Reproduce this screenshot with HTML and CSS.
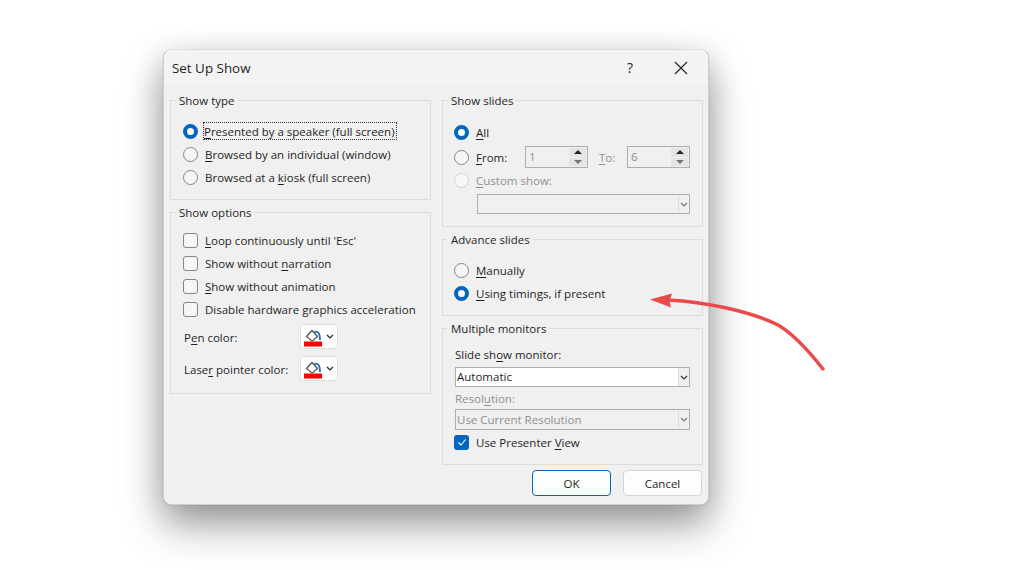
FILE: index.html
```html
<!DOCTYPE html>
<html lang="en">
<head>
<meta charset="utf-8">
<title>Set Up Show</title>
<link rel="stylesheet" href="styles.css">
</head>
<body>
<div class="dialog">
  <header class="titlebar">
    <span class="title">Set Up Show</span>
    <span class="help">?</span>
    <svg class="close" width="14" height="14" viewBox="0 0 14 14"><path d="M1 1L13 13M13 1L1 13" stroke="#222" stroke-width="1.2" fill="none"/></svg>
  </header>
  <div class="content">
    <div class="column">
      <fieldset class="group type">
        <legend>Show type</legend>
        <div class="rows radios">
          <label class="row"><span class="radio on"></span><span class="focus"><u>P</u>resented by a speaker (full screen)</span></label>
          <label class="row"><span class="radio"></span><span class="label"><u>B</u>rowsed by an individual (window)</span></label>
          <label class="row"><span class="radio"></span><span class="label">Browsed at a <u>k</u>iosk (full screen)</span></label>
        </div>
      </fieldset>
      <fieldset class="group options">
        <legend>Show options</legend>
        <div class="rows checks">
          <label class="row"><span class="check"></span><span><u>L</u>oop continuously until 'Esc'</span></label>
          <label class="row"><span class="check"></span><span>Show without <u>n</u>arration</span></label>
          <label class="row"><span class="check"></span><span><u>S</u>how without animation</span></label>
          <label class="row"><span class="check"></span><span>Disable hardware <u>g</u>raphics acceleration</span></label>
        </div>
        <div class="colors">
          <div class="color-row"><span class="color-label">P<u>e</u>n color:</span>
            <span class="color-btn">
              <svg width="20" height="20" viewBox="0 0 20 20"><path d="M2.500 9.500L8 3.500L13.500 9.500L9 13.500H7.500Z" fill="#fff" stroke="#4a4a4a" stroke-width="1.2"/><path d="M10.500 4.800C14 4 16 6 16 13" fill="none" stroke="#1f6fb5" stroke-width="1.800"/><rect y="14.500" width="18" height="5" fill="#f00"/></svg>
              <svg class="chev" width="8" height="5" viewBox="0 0 8 5"><path d="M1 1L4 4L7 1" stroke="#222" stroke-width="1.2" fill="none"/></svg>
            </span></div>
          <div class="color-row"><span class="color-label">Lase<u>r</u> pointer color:</span>
            <span class="color-btn">
              <svg width="20" height="20" viewBox="0 0 20 20"><path d="M2.500 9.500L8 3.500L13.500 9.500L9 13.500H7.500Z" fill="#fff" stroke="#4a4a4a" stroke-width="1.2"/><path d="M10.500 4.800C14 4 16 6 16 13" fill="none" stroke="#1f6fb5" stroke-width="1.800"/><rect y="14.500" width="18" height="5" fill="#f00"/></svg>
              <svg class="chev" width="8" height="5" viewBox="0 0 8 5"><path d="M1 1L4 4L7 1" stroke="#222" stroke-width="1.2" fill="none"/></svg>
            </span></div>
        </div>
      </fieldset>
    </div>
    <div class="column right">
      <fieldset class="group slides">
        <legend>Show slides</legend>
        <label class="row all"><span class="radio on"></span><span><u>A</u>ll</span></label>
        <div class="row from">
          <span class="radio"></span><span class="from-label"><u>F</u>rom:</span>
          <span class="spin"><span class="spin-val">1</span><span class="spin-btns"><span class="up"></span><span class="down"></span></span></span>
          <span class="to-label"><u>T</u>o:</span>
          <span class="spin"><span class="spin-val">6</span><span class="spin-btns"><span class="up"></span><span class="down"></span></span></span>
        </div>
        <label class="row custom disabled"><span class="radio off"></span><span><u>C</u>ustom show:</span></label>
        <div class="combo grey custom-combo"><span class="combo-text"></span><span class="combo-arrow"><svg width="8" height="5" viewBox="0 0 8 5"><path d="M1 1L4 4L7 1" stroke="#777" stroke-width="1.2" fill="none"/></svg></span></div>
      </fieldset>
      <fieldset class="group advance">
        <legend>Advance slides</legend>
        <div class="rows radios">
          <label class="row"><span class="radio"></span><span class="label"><u>M</u>anually</span></label>
          <label class="row"><span class="radio on"></span><span class="label"><u>U</u>sing timings, if present</span></label>
        </div>
      </fieldset>
      <fieldset class="group monitors">
        <legend>Multiple monitors</legend>
        <div class="field-label">Slide sh<u>o</u>w monitor:</div>
        <div class="combo"><span class="combo-text">Automatic</span><span class="combo-arrow"><svg width="8" height="5" viewBox="0 0 8 5"><path d="M1 1L4 4L7 1" stroke="#333" stroke-width="1.2" fill="none"/></svg></span></div>
        <div class="field-label res disabled">Resol<u>u</u>tion:</div>
        <div class="combo grey"><span class="combo-text">Use Current Resolution</span><span class="combo-arrow"><svg width="8" height="5" viewBox="0 0 8 5"><path d="M1 1L4 4L7 1" stroke="#777" stroke-width="1.2" fill="none"/></svg></span></div>
        <label class="row presenter"><span class="check on"><svg width="10" height="10" viewBox="0 0 10 10"><path d="M1.500 5.500L4 8L8.500 2.500" stroke="#fff" stroke-width="1.100" fill="none"/></svg></span><span>Use Presenter <u>V</u>iew</span></label>
      </fieldset>
    </div>
  </div>
  <footer class="actions">
    <button class="btn primary">OK</button>
    <button class="btn">Cancel</button>
  </footer>
</div>
<svg class="arrow" width="1024" height="570" viewBox="0 0 1024 570">
  <path d="M668 300C705 302 750 311 778 325C792 333 808 350 823 369" stroke="#ea4a4a" stroke-width="3.400" stroke-linecap="round" fill="none"/>
  <path d="M650 299.500L672 293.500L669.500 301L671 307.500Z" fill="#ea4a4a"/>
</svg>
</body>
</html>
```
FILE: styles.css
```css
* { box-sizing: border-box; }
html, body { margin: 0; height: 570px; overflow: hidden; background: #fff; }
body {
  padding: 50px 0 0 163px;
  font-family: "Open Sans", "Noto Sans", sans-serif;
  font-size: 11.5px;
  color: #1f1f1f;
}
u { text-underline-offset: 2px; text-decoration-thickness: 1px; }

.dialog {
  width: 546px;
  height: 455px;
  background: #f0f0f0;
  border-radius: 8px;
  border: 1px solid #cfcfcf;
  border-width: 0 1px 1px 1px;
  box-shadow: 0 0 1px rgba(0,0,0,.35), 0 20px 40px rgba(0,0,0,.38), 0 4px 30px rgba(0,0,0,.12);
  display: flex;
  flex-direction: column;
}
.titlebar {
  height: 35px;
  background: #f3f3f3;
  border-radius: 8px 8px 0 0;
  display: flex;
  align-items: center;
  padding: 0 20px 0 8px;
}
.title { font-size: 13.4px; flex: 1; }
.help { font-size: 14px; margin-right: 41px; }

.content {
  flex: 1;
  display: grid;
  grid-template-columns: 261px 261px;
  column-gap: 11px;
  padding: 7px 0 0 6px;
}
.column { display: flex; flex-direction: column; gap: 4px; }

.group {
  margin: 0;
  min-width: 0;
  border: 1px solid #dcdcdc;
  padding: 0 12px;
}
.group legend { padding: 0 3px 0 4px; margin-left: -8px; line-height: 18px; height: 16px; }
.type { height: 108px; }
.options { height: 190px; }
.slides { height: 135px; }
.advance { height: 85px; }
.monitors { height: 145px; }

.rows { display: flex; flex-direction: column; gap: 5px; }
.radios { padding-top: 14px; }
.checks { padding-top: 11px; }
.row { display: flex; align-items: center; height: 18px; white-space: nowrap; }
.label { padding-top: 1px; }

.radio {
  width: 15px;
  height: 15px;
  border-radius: 50%;
  border: 1px solid #858585;
  background: #f6f6f6;
  margin-right: 7px;
  flex: none;
}
.radio.on { border: 4px solid #0067c0; background: #fff; }
.radio.off { border-color: #d2d2d2; background: #f7f7f7; }
.right .radio, .right .check { margin-left: -1px; }

.check {
  width: 15px;
  height: 15px;
  border-radius: 3px;
  border: 1px solid #858585;
  background: #f6f6f6;
  margin-right: 7px;
  flex: none;
  display: flex;
  align-items: center;
  justify-content: center;
}
.check.on { border: 0; background: #0067c0; }

.focus { outline: 1px dotted #333; outline-offset: 0; padding: 1px 1px 0 0; margin-left: -1px; }

.colors { padding-top: 6px; display: flex; flex-direction: column; gap: 7px; }
.color-row { display: flex; align-items: center; height: 25px; padding-left: 1px; }
.color-label { width: 116px; padding-top: 1px; }
.color-btn {
  width: 38px;
  height: 25px;
  background: #fff;
  border: 1px solid #dedede;
  border-radius: 3px;
  display: flex;
  align-items: center;
  padding-left: 3px;
  gap: 2px;
}

.disabled { color: #8f8f8f; }

.all { margin-top: 15px; }
.from { margin-top: 5px; height: 22px; }
.from-label { width: 49px; flex: none; }
.to-label { width: 28px; margin-left: 11px; flex: none; color: #8f8f8f; }
.spin {
  width: 63px;
  height: 22px;
  flex: none;
  border: 1px solid #adadad;
  display: flex;
  padding: 1px;
  color: #8f8f8f;
}
.spin-val { flex: 1; padding-left: 2px; line-height: 18px; }
.spin-btns { width: 17px; display: flex; flex-direction: column; gap: 1px; }
.up, .down { flex: 1; display: flex; align-items: center; justify-content: center; background: #e4e4e4; }
.up::before { content: ""; border: 4px solid transparent; border-top: 0; border-bottom: 4px solid #222; }
.down::before { content: ""; border: 4px solid transparent; border-bottom: 0; border-top: 4px solid #777; }
.custom { margin-top: 3px; }

.combo {
  height: 20px;
  border: 1px solid #adadad;
  background: #fff;
  display: flex;
  align-items: center;
}
.combo.grey { background: #f0f0f0; color: #8f8f8f; }
.combo-text { flex: 1; padding: 0 0 1px 1px; }
.combo-arrow {
  width: 11px;
  height: 100%;
  border-left: 1px solid #dcdcdc;
  display: flex;
  align-items: center;
  justify-content: center;
  background: #f0f0f0;
}
.custom-combo { margin: 5px 0 0 22px; }

.field-label { line-height: 16px; padding-top: 11px; height: 27px; margin-bottom: 4px; }
.field-label.res { padding-top: 3px; height: 19px; margin-top: 1px; margin-bottom: 2px; }
.res + .combo { height: 21px; }
.presenter { margin-top: 3px; }

.actions {
  display: flex;
  justify-content: flex-end;
  gap: 12px;
  padding: 0 6px 8px 0;
}
.btn {
  width: 79px;
  height: 26px;
  font: inherit;
  color: inherit;
  background: #fdfdfd;
  border: 1px solid #d4d4d4;
  border-radius: 4px;
  padding: 0;
}
.btn.primary { border-color: #0067c0; }

.arrow { position: absolute; left: 0; top: 0; pointer-events: none; }
```
